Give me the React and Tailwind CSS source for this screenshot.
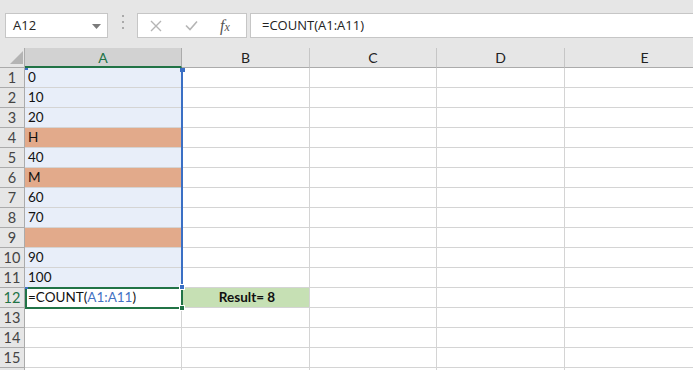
import React from "react";

const COLS = [
  { key: "A", w: 157 },
  { key: "B", w: 128 },
  { key: "C", w: 127 },
  { key: "D", w: 128 },
  { key: "E", w: 160 },
];

const DATA = ["0", "10", "20", "H", "40", "M", "60", "70", "", "90", "100"];
const SALMON = [3, 5, 8];

function Toolbar() {
  return (
    <div className="flex h-[48px] items-start bg-[#e6e6e6] pt-[13px] pl-[5px]">
      <div className="relative flex h-[25px] w-[103px] items-center border border-[#c6c6c6] bg-white pl-[7px] text-[13px] text-[#222]" style={{ fontFamily: "'Open Sans', 'Liberation Sans', sans-serif" }}>
        A12
        <svg className="absolute right-[6px] top-[10px]" width="9" height="5" viewBox="0 0 9 5">
          <path d="M0 0 H9 L4.5 5 Z" fill="#7b7b7b" />
        </svg>
      </div>
      <div className="flex w-[29px] flex-col items-center gap-[4px] pt-[2px]">
        <span className="h-[2px] w-[2px] bg-[#aaaaaa]" />
        <span className="h-[2px] w-[2px] bg-[#aaaaaa]" />
        <span className="h-[2px] w-[2px] bg-[#aaaaaa]" />
      </div>
      <div className="flex h-[25px] w-[110px] items-center border border-[#c6c6c6] bg-white">
        <svg className="ml-[12px]" width="12" height="12" viewBox="0 0 12 12">
          <path d="M1 1 L11 11 M11 1 L1 11" stroke="#b5b5b5" strokeWidth="1.4" />
        </svg>
        <svg className="ml-[23px]" width="13" height="11" viewBox="0 0 13 11">
          <path d="M1 5.5 L5 9.5 L12 1.5" stroke="#b5b5b5" strokeWidth="1.6" fill="none" />
        </svg>
        <span className="ml-[22px] text-[16px] italic leading-none text-[#555]" style={{ fontFamily: "'Liberation Serif', serif" }}>
          f<span className="text-[12px]">x</span>
        </span>
      </div>
      <div className="ml-[3px] flex h-[25px] flex-1 items-center border border-r-0 border-[#c6c6c6] bg-white pl-[11px] text-[13px] text-[#222]" style={{ fontFamily: "'Open Sans', 'Liberation Sans', sans-serif" }}>
        =COUNT(A1:A11)
      </div>
    </div>
  );
}

function HeaderRow() {
  return (
    <div className="flex h-[20px]">
      <div className="relative h-[20px] w-[25px] shrink-0 border-b border-r border-[#ababab] bg-[#e6e6e6]">
        <svg className="absolute left-[10px] top-[3px]" width="13" height="13" viewBox="0 0 13 13">
          <path d="M13 0 V13 H0 Z" fill="#b4b4b4" />
        </svg>
      </div>
      {COLS.map((c) => {
        const sel = c.key === "A";
        return (
          <div
            key={c.key}
            style={{ width: c.w }}
            className={
              "flex h-[20px] shrink-0 items-center justify-center text-[14px] " +
              (sel
                ? "border-b-2 border-r border-b-[#217346] border-r-[#ababab] bg-[#d2d2d2] text-[#217346]"
                : "border-b border-r border-b-[#ababab] border-r-[#c6c6c6] bg-[#e6e6e6] text-[#222]")
            }
          >
            {c.key}
          </div>
        );
      })}
    </div>
  );
}

function Row({ n }) {
  const inData = n <= 11;
  const salmon = SALMON.includes(n - 1);
  return (
    <div className="flex h-[20px]">
      <div
        className={
          "flex h-[20px] w-[25px] shrink-0 items-center justify-center border-b border-r border-[#ababab] bg-[#e6e6e6] text-[14.5px] " +
          (n === 12 ? "text-[#217346]" : "text-[#444]")
        }
      >
        {n}
      </div>
      {COLS.map((c) => {
        let bg = "bg-white";
        let content = null;
        let extra = "";
        if (c.key === "A" && inData) {
          bg = salmon ? "bg-[#e2aa8b]" : "bg-[#e8eef9]";
          content = DATA[n - 1];
        }
        if (c.key === "A" && n === 12) {
          content = (
            <>
              =COUNT(<span className="text-[#4472c4]">A1:A11</span>)
            </>
          );
        }
        if (c.key === "B" && n === 12) {
          bg = "bg-[#c6e0b4]";
          extra = "justify-center font-bold";
          content = "Result= 8";
        }
        return (
          <div
            key={c.key}
            style={{ width: c.w }}
            className={`flex h-[20px] shrink-0 items-center border-b border-r border-[#d4d4d4] pl-[3px] text-[13.5px] text-[#111] ${bg} ${extra}`}
          >
            {content}
          </div>
        );
      })}
    </div>
  );
}

export default function App() {
  const rows = Array.from({ length: 15 }, (_, i) => i + 1);
  return (
    <div className="h-[370px] w-[693px] overflow-hidden bg-white" style={{ fontFamily: "Lato, 'Liberation Sans', sans-serif" }}>
      <Toolbar />
      <div className="relative">
        <HeaderRow />
        {rows.map((n) => (
          <Row key={n} n={n} />
        ))}
        <div className="flex h-[2px]">
          <div className="w-[25px] shrink-0 border-r border-[#ababab] bg-[#e6e6e6]" />
          <div className="w-[157px] shrink-0 border-r border-[#d4d4d4]" />
          <div className="w-[128px] shrink-0 border-r border-[#d4d4d4]" />
          <div className="w-[127px] shrink-0 border-r border-[#d4d4d4]" />
          <div className="w-[128px] shrink-0 border-r border-[#d4d4d4]" />
        </div>
        {/* selection overlay A1:A11 */}
        <div className="pointer-events-none absolute left-[181px] top-[20px] h-[220px] w-[2px] bg-[#3a6fc4]" />
        <div className="pointer-events-none absolute left-[25px] top-[20px] h-[2px] w-[3px] bg-[#3a6fc4]" />
        <div className="pointer-events-none absolute left-[180px] top-[20px] h-[4px] w-[5px] bg-[#3a6fc4]" />
        {/* active cell A12 */}
        <div className="pointer-events-none absolute left-[25px] top-[239px] h-[22px] w-[158px] border-2 border-[#217346]" />
        <div className="pointer-events-none absolute left-[25px] top-[239px] h-[2px] w-[3px] bg-[#3a6fc4]" />
        <div className="pointer-events-none absolute left-[179px] top-[236px] h-[6px] w-[6px] border border-white bg-[#3a6fc4]" />
        <div className="pointer-events-none absolute left-[179px] top-[257px] h-[6px] w-[6px] border border-white bg-[#217346]" />
      </div>
    </div>
  );
}
